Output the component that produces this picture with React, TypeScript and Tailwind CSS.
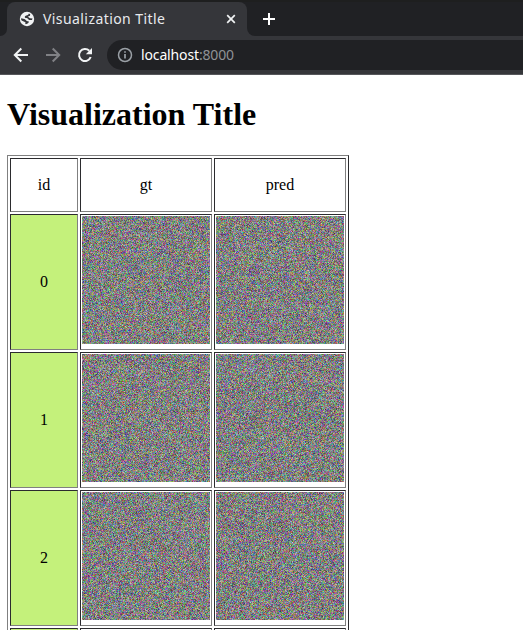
import { useEffect, useRef } from "react";

function NoiseImage({ seed }: { seed: number }) {
  const ref = useRef<HTMLCanvasElement>(null);
  useEffect(() => {
    const ctx = ref.current?.getContext("2d");
    if (!ctx) return;
    const image = ctx.createImageData(128, 128);
    let s = (seed * 7919 + 12345) >>> 0;
    const next = () => {
      s = (s + 0x6d2b79f5) >>> 0;
      let t = s;
      t = Math.imul(t ^ (t >>> 15), t | 1);
      t ^= t + Math.imul(t ^ (t >>> 7), t | 61);
      return ((t ^ (t >>> 14)) >>> 0) & 255;
    };
    // Mostly mid-tone values: two samples are blended for each channel.
    const channel = () => 128 + (next() - 127) * 0.42 + (next() - 127) * 0.28;
    for (let i = 0; i < image.data.length; i += 4) {
      image.data[i] = channel();
      image.data[i + 1] = channel();
      image.data[i + 2] = channel();
      image.data[i + 3] = 255;
    }
    ctx.putImageData(image, 0, 0);
  }, [seed]);
  return <canvas ref={ref} width={128} height={128} className="block h-32 w-32" />;
}

const cell =
  "border border-t-[#2b2b2e] border-l-[#2b2b2e] border-r-[#808080] border-b-[#808080]";

function BrowserChrome() {
  return (
    <header className="h-[75px] border-b border-[#56575b] bg-[#35363a] font-['Noto_Sans',sans-serif]">
      <div className="flex h-9 border-t-2 border-[#1e1f1f] bg-[#202124]">
        <div className="flex w-[7px] bg-[#35363a]">
          <div className="w-full rounded-br-[7px] bg-[#202124]" />
        </div>
        <div className="flex w-60 items-center rounded-t-lg bg-[#35363a] pl-3">
          <svg className="h-4 w-4 shrink-0" viewBox="0 0 16 16">
            <circle cx="8" cy="8" r="7.2" fill="#f1f3f4" />
            <path
              d="M9.8 2.6C9.8 4 8.7 4.2 7.3 4.4C5.6 4.8 5.2 6.6 6.6 7C8 7.4 8.8 7.2 9.4 8.2C10 9.2 11 9.2 12.9 9L13.6 7.6L11 7.2L9.6 6.2L8.8 5.8L11 4.8L11.2 3.2Z"
              fill="#35363a"
            />
            <path
              d="M2.1 7.2L5.4 8.1C6.6 8.5 7 9.6 7.8 10L9.9 10.4C9.8 11.8 8.6 12.7 6.9 13.2L6.2 12.7L6.6 11.4C5 10.6 3.2 10 2.2 9Z"
              fill="#35363a"
            />
          </svg>
          <span className="ml-2 w-[122px] text-[14px] leading-5 tracking-[0.42px] whitespace-nowrap text-[#e8eaed]">
            Visualization Title
          </span>
          <svg className="ml-[58px] h-4 w-4 shrink-0" viewBox="0 0 16 16">
            <path d="M4.2 4.2l7.6 7.6M11.8 4.2l-7.6 7.6" stroke="#f1f3f4" strokeWidth="1.7" />
          </svg>
        </div>
        <div className="w-2 bg-[#35363a]">
          <div className="h-full rounded-bl-lg bg-[#202124]" />
        </div>
        <svg className="mt-[9px] ml-[6px] h-4 w-4" viewBox="0 0 16 16">
          <path d="M8 2v12M2 8h12" stroke="#fff" strokeWidth="2" />
        </svg>
      </div>
      <div className="flex h-[38px] items-center pl-[13px]">
        <svg className="h-4 w-4" viewBox="0 0 16 16">
          <path d="M15 8H2M8.3 1.5L1.8 8l6.5 6.5" fill="none" stroke="#f1f3f4" strokeWidth="2" />
        </svg>
        <svg className="ml-4 h-4 w-4" viewBox="0 0 16 16">
          <path d="M1 8h13M7.7 1.5L14.2 8l-6.5 6.5" fill="none" stroke="#808185" strokeWidth="2" />
        </svg>
        <svg className="ml-4 h-4 w-4" viewBox="0 0 16 16">
          <path d="M13.7 10A6 6 0 1 1 12.3 3.8" fill="none" stroke="#f1f3f4" strokeWidth="2" />
          <path d="M15 1v6.2H8.8z" fill="#f1f3f4" />
        </svg>
        <div className="ml-[14px] flex h-[30px] flex-1 items-center rounded-l-full bg-[#202124] pl-[10px]">
          <svg className="h-4 w-4" viewBox="0 0 16 16">
            <circle cx="8" cy="8" r="6.5" fill="none" stroke="#9aa0a6" strokeWidth="1.5" />
            <path d="M8 7v4.6M8 4.2v1.6" stroke="#9aa0a6" strokeWidth="1.7" />
          </svg>
          <span className="ml-2 text-[14px] leading-5 tracking-[-0.14px] text-white">
            localhost<span className="text-[#8f9296]">:8000</span>
          </span>
        </div>
      </div>
    </header>
  );
}

export default function App() {
  return (
    <div className="h-[630px] w-[523px] overflow-hidden bg-white">
      <BrowserChrome />
      <main className="pl-[7px] font-['Liberation_Serif',serif] text-base leading-[18px] text-black">
        <h1 className="pt-[21px] pb-[22px] text-[32px] leading-[37px] font-bold">
          Visualization Title
        </h1>
        <table className="w-[342px] table-fixed border-separate border-spacing-[2px] border border-t-[#808080] border-r-[#2b2b2e] border-b-[#2b2b2e] border-l-[#808080] text-center">
          <colgroup>
            <col className="w-[68px]" />
            <col className="w-[132px]" />
            <col className="w-[132px]" />
          </colgroup>
          <tbody>
            <tr className="h-[54px]">
              <td className={cell}>id</td>
              <td className={cell}>gt</td>
              <td className={cell}>pred</td>
            </tr>
            {[0, 1, 2, 3].map((id) => (
              <tr key={id} className="h-[136px]">
                <td className={`${cell} bg-[#c4f17b]`}>{id}</td>
                <td className={`${cell} p-px align-top`}>
                  <NoiseImage seed={id * 2 + 1} />
                </td>
                <td className={`${cell} p-px align-top`}>
                  <NoiseImage seed={id * 2 + 2} />
                </td>
              </tr>
            ))}
          </tbody>
        </table>
      </main>
    </div>
  );
}
